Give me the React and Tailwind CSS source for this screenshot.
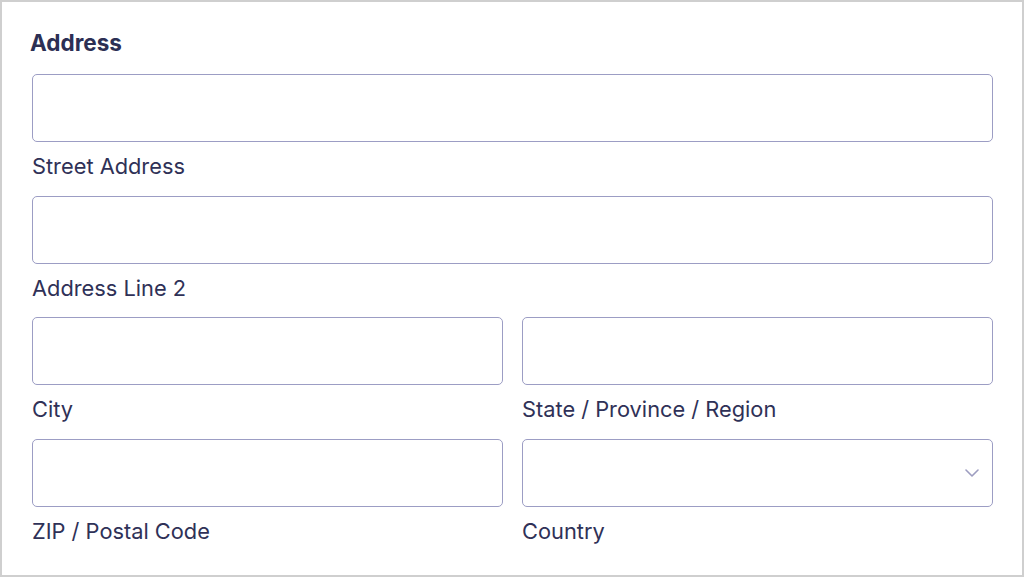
import React from 'react';

// Address block: pairs of field + caption, laid out one or two per row
const ROWS = [
    [{ id: 'street', label: 'Street Address' }],
    [{ id: 'line2', label: 'Address Line 2' }],
    [
        { id: 'city', label: 'City' },
        { id: 'state', label: 'State / Province / Region' },
    ],
    [
        { id: 'zip', label: 'ZIP / Postal Code' },
        { id: 'country', label: 'Country', select: true },
    ],
];

function Chevron() {
    return (
        <svg className="pointer-events-none absolute right-[14px] top-1/2 -translate-y-1/2" width="14" height="8" viewBox="0 0 14 8" fill="none">
            <path d="M1 1l6 6 6-6" stroke="#9d9dc0" strokeWidth="1.6" strokeLinecap="round" strokeLinejoin="round" />
        </svg>
    );
}

function Field({ field }) {
    return (
        <div className="flex flex-col">
            <div className="relative">
                {field.select ? (
                    <select
                        id={field.id}
                        className="block h-[68px] w-full appearance-none rounded-[5px] border border-[#9c9dc4] bg-white px-4 outline-none"
                    >
                        <option value="" />
                    </select>
                ) : (
                    <input
                        id={field.id}
                        type="text"
                        className="block h-[68px] w-full rounded-[5px] border border-[#9c9dc4] bg-white px-4 outline-none"
                    />
                )}
                {field.select && <Chevron />}
            </div>
            <label htmlFor={field.id} className="mt-[10px] text-[21.8px] leading-[28px] text-[#2f3157]">
                {field.label}
            </label>
        </div>
    );
}

export default function App() {
    return (
        <div className="h-[577px] w-[1024px] overflow-hidden border-2 border-[#cfcfcf] bg-white font-['Inter','Liberation_Sans',sans-serif]">
            <div className="pl-[30px] pr-[29px] pt-[27.5px]">
                <h2 className="-ml-[2px] mb-[18.5px] text-[22.5px] font-bold leading-[26px] text-[#2c2f54]">Address</h2>
                <div className="flex flex-col gap-[15.5px]">
                    {ROWS.map((row, idx) => (
                        <div key={idx} className={row.length > 1 ? 'grid grid-cols-2 gap-x-[19px]' : ''}>
                            {row.map(f => (
                                <Field key={f.id} field={f} />
                            ))}
                        </div>
                    ))}
                </div>
            </div>
        </div>
    );
}
